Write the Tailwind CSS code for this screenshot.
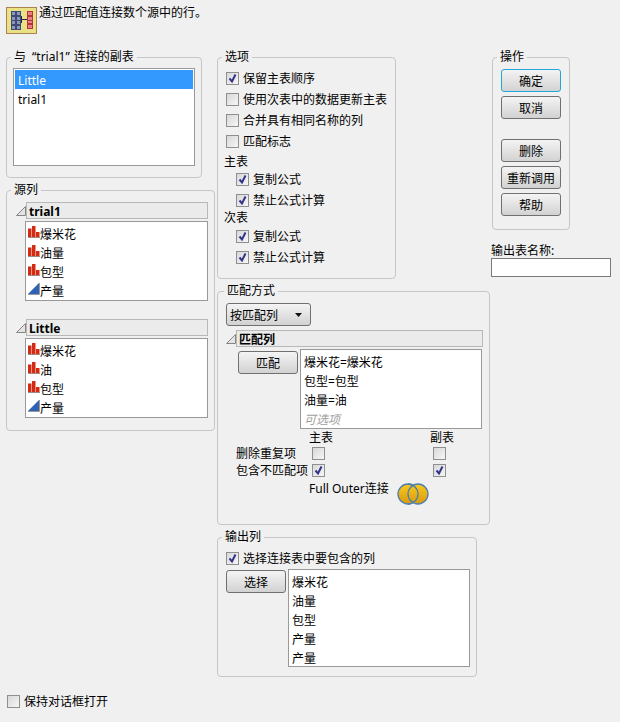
<!DOCTYPE html>
<html lang="zh-CN">
<head>
  <meta charset="UTF-8" />
  <title>联接</title>
  <script src="https://cdn.jsdelivr.net/npm/@tailwindcss/browser@4"></script>
</head>
<body class="w-[620px] h-[722px] overflow-hidden bg-[#f0f0f0] text-black text-[12px] leading-[19px] font-['Noto_Sans','Noto_Sans_CJK_SC',sans-serif]">

  <!-- 标题 -->
  <header class="h-[50px] pl-[6px] pt-[7px] flex items-start">
    <svg class="w-[31px] h-[27px]" viewBox="0 0 31 27">
      <rect x="0.5" y="0.5" width="30" height="26" fill="#e9e183" stroke="#a8834f" />
      <rect x="5" y="4" width="10" height="19" fill="#3c4a78" />
      <g fill="#8d97b8">
        <rect x="6" y="5" width="3" height="3" /><rect x="11" y="5" width="3" height="3" />
        <rect x="6" y="10" width="3" height="3" /><rect x="11" y="10" width="3" height="3" />
        <rect x="6" y="14" width="3" height="3" /><rect x="11" y="14" width="3" height="3" />
        <rect x="6" y="19" width="3" height="3" /><rect x="11" y="19" width="3" height="3" />
      </g>
      <rect x="21" y="4" width="6" height="18" fill="#b8343c" />
      <g fill="#e8808a">
        <rect x="22" y="5" width="4" height="3" /><rect x="22" y="10" width="4" height="3" />
        <rect x="22" y="14" width="4" height="2" /><rect x="22" y="18" width="4" height="3" />
      </g>
      <path d="M15 12.500H21M15.500 9V16" stroke="#26264e" stroke-width="1" fill="none" />
    </svg>
    <p class="ml-[2px] -mt-[4px]">通过匹配值连接数个源中的行。</p>
  </header>

  <div class="flex pl-[6px] items-start">
    <!-- 左列 -->
    <div class="w-[209px] flex flex-col items-start">
      <fieldset class="w-[196px] h-[128px] border border-[#c6c6c6] rounded-[4px] px-[6px]">
        <legend class="-ml-[2px] px-[3px] leading-[14px]">与<span class="ml-[6px]">“trial1”</span><span class="ml-[4px]">连接的副表</span></legend>
        <div class="mt-[4px] h-[98px] border border-[#999999] bg-white p-px">
          <div class="h-[19px] bg-[#3399ff] text-white pl-[3px] pt-px">Little</div>
          <div class="h-[19px] pl-[3px] pt-px">trial1</div>
        </div>
      </fieldset>

      <fieldset class="mt-[5px] w-[209px] h-[248px] border border-[#c6c6c6] rounded-[4px] pl-[9px] pr-[6px]">
        <legend class="-ml-[5px] px-[3px] leading-[14px]">源列</legend>
        <div class="mt-[5px] flex items-center h-[17px]">
          <svg class="w-[10px] h-[10px]" viewBox="0 0 10 10"><path d="M9.500 0.500V9.500H0.500Z" fill="#e4e4e4" stroke="#858585" /></svg>
          <div class="h-[17px] flex-1 border border-[#b8b8b8] bg-[#ebebeb] pl-[2px] font-bold leading-[17px]">trial1</div>
        </div>
        <div class="mt-[2px] ml-[9px] h-[80px] border border-[#999999] bg-white">
          <div class="h-[19px] flex items-start pl-[2px]"><svg class="mt-[4px] w-[12px] h-[12px]" viewBox="0 0 12 12"><path d="M0 2.500H3.500V11H0ZM4 0H7.500V11H4ZM8 6H11.500V11H8Z" fill="#d42a12" /><path d="M0 11.500H12" stroke="#a08a86" /></svg><span class="mt-[3px]">爆米花</span></div>
          <div class="h-[19px] flex items-start pl-[2px]"><svg class="mt-[4px] w-[12px] h-[12px]" viewBox="0 0 12 12"><path d="M0 2.500H3.500V11H0ZM4 0H7.500V11H4ZM8 6H11.500V11H8Z" fill="#d42a12" /><path d="M0 11.500H12" stroke="#a08a86" /></svg><span class="mt-[3px]">油量</span></div>
          <div class="h-[19px] flex items-start pl-[2px]"><svg class="mt-[4px] w-[12px] h-[12px]" viewBox="0 0 12 12"><path d="M0 2.500H3.500V11H0ZM4 0H7.500V11H4ZM8 6H11.500V11H8Z" fill="#d42a12" /><path d="M0 11.500H12" stroke="#a08a86" /></svg><span class="mt-[3px]">包型</span></div>
          <div class="h-[19px] flex items-start pl-[2px]"><svg class="mt-[4px] w-[12px] h-[12px]" viewBox="0 0 12 12"><path d="M0 11L11 0V11Z" fill="#2e62b4" /><path d="M0 11.500H11.500V0" fill="none" stroke="#999999" /></svg><span class="mt-[3px]">产量</span></div>
        </div>
        <div class="mt-[18px] flex items-center h-[17px]">
          <svg class="w-[10px] h-[10px]" viewBox="0 0 10 10"><path d="M9.500 0.500V9.500H0.500Z" fill="#e4e4e4" stroke="#858585" /></svg>
          <div class="h-[17px] flex-1 border border-[#b8b8b8] bg-[#ebebeb] pl-[2px] font-bold leading-[17px]">Little</div>
        </div>
        <div class="mt-[2px] ml-[9px] h-[80px] border border-[#999999] bg-white">
          <div class="h-[19px] flex items-start pl-[2px]"><svg class="mt-[4px] w-[12px] h-[12px]" viewBox="0 0 12 12"><path d="M0 2.500H3.500V11H0ZM4 0H7.500V11H4ZM8 6H11.500V11H8Z" fill="#d42a12" /><path d="M0 11.500H12" stroke="#a08a86" /></svg><span class="mt-[3px]">爆米花</span></div>
          <div class="h-[19px] flex items-start pl-[2px]"><svg class="mt-[4px] w-[12px] h-[12px]" viewBox="0 0 12 12"><path d="M0 2.500H3.500V11H0ZM4 0H7.500V11H4ZM8 6H11.500V11H8Z" fill="#d42a12" /><path d="M0 11.500H12" stroke="#a08a86" /></svg><span class="mt-[3px]">油</span></div>
          <div class="h-[19px] flex items-start pl-[2px]"><svg class="mt-[4px] w-[12px] h-[12px]" viewBox="0 0 12 12"><path d="M0 2.500H3.500V11H0ZM4 0H7.500V11H4ZM8 6H11.500V11H8Z" fill="#d42a12" /><path d="M0 11.500H12" stroke="#a08a86" /></svg><span class="mt-[3px]">包型</span></div>
          <div class="h-[19px] flex items-start pl-[2px]"><svg class="mt-[4px] w-[12px] h-[12px]" viewBox="0 0 12 12"><path d="M0 11L11 0V11Z" fill="#2e62b4" /><path d="M0 11.500H11.500V0" fill="none" stroke="#999999" /></svg><span class="mt-[3px]">产量</span></div>
        </div>
      </fieldset>
    </div>

    <!-- 中列 -->
    <div class="ml-[2px] w-[273px] flex flex-col items-start">
      <fieldset class="w-[179px] h-[229px] border border-[#c6c6c6] rounded-[4px] pl-[6px]">
        <legend class="-ml-[2px] px-[3px] leading-[14px]">选项</legend>
        <div class="pl-[2px] pt-[5px] flex flex-col gap-[2px]">
          <label class="h-[19px] flex items-center gap-[4px]"><span class="w-[13px] h-[13px] border border-[#8e8f8f] bg-linear-to-br from-[#d8d8d8] to-[#f6f6f6]"><svg viewBox="0 0 11 11"><path d="M2.500 5.500L5 8.500L8.500 1.500" stroke="#33338a" stroke-width="2" fill="none" /></svg></span>保留主表顺序</label>
          <label class="h-[19px] flex items-center gap-[4px]"><span class="w-[13px] h-[13px] border border-[#8e8f8f] bg-linear-to-br from-[#d8d8d8] to-[#f6f6f6]"></span>使用次表中的数据更新主表</label>
          <label class="h-[19px] flex items-center gap-[4px]"><span class="w-[13px] h-[13px] border border-[#8e8f8f] bg-linear-to-br from-[#d8d8d8] to-[#f6f6f6]"></span>合并具有相同名称的列</label>
          <label class="h-[19px] flex items-center gap-[4px]"><span class="w-[13px] h-[13px] border border-[#8e8f8f] bg-linear-to-br from-[#d8d8d8] to-[#f6f6f6]"></span>匹配标志</label>
        </div>
        <p class="mt-px h-[18px]">主表</p>
        <div class="pl-[12px] flex flex-col gap-[2px]">
          <label class="h-[19px] flex items-center gap-[4px]"><span class="w-[13px] h-[13px] border border-[#8e8f8f] bg-linear-to-br from-[#d8d8d8] to-[#f6f6f6]"><svg viewBox="0 0 11 11"><path d="M2.500 5.500L5 8.500L8.500 1.500" stroke="#33338a" stroke-width="2" fill="none" /></svg></span>复制公式</label>
          <label class="h-[19px] flex items-center gap-[4px]"><span class="w-[13px] h-[13px] border border-[#8e8f8f] bg-linear-to-br from-[#d8d8d8] to-[#f6f6f6]"><svg viewBox="0 0 11 11"><path d="M2.500 5.500L5 8.500L8.500 1.500" stroke="#33338a" stroke-width="2" fill="none" /></svg></span>禁止公式计算</label>
        </div>
        <p class="-mt-[2px] h-[19px]">次表</p>
        <div class="pl-[12px] flex flex-col gap-[2px]">
          <label class="h-[19px] flex items-center gap-[4px]"><span class="w-[13px] h-[13px] border border-[#8e8f8f] bg-linear-to-br from-[#d8d8d8] to-[#f6f6f6]"><svg viewBox="0 0 11 11"><path d="M2.500 5.500L5 8.500L8.500 1.500" stroke="#33338a" stroke-width="2" fill="none" /></svg></span>复制公式</label>
          <label class="h-[19px] flex items-center gap-[4px]"><span class="w-[13px] h-[13px] border border-[#8e8f8f] bg-linear-to-br from-[#d8d8d8] to-[#f6f6f6]"><svg viewBox="0 0 11 11"><path d="M2.500 5.500L5 8.500L8.500 1.500" stroke="#33338a" stroke-width="2" fill="none" /></svg></span>禁止公式计算</label>
        </div>
      </fieldset>

      <fieldset class="mt-[5px] w-[273px] h-[241px] border border-[#c6c6c6] rounded-[4px] pl-[8px] pr-[6px]">
        <legend class="-ml-[2px] px-[3px] leading-[14px]">匹配方式</legend>
        <button class="mt-[5px] w-[85px] h-[23px] flex items-center justify-between px-[3px] pr-[8px] pt-px border border-[#707070] rounded-[3px] bg-linear-to-b from-[#f4f4f4] to-[#d2d2d2]">按匹配列<svg class="w-[7px] h-[4px]" viewBox="0 0 7 4"><path d="M0 0H7L3.500 4Z" fill="#111" /></svg></button>
        <div class="mt-[4px] flex items-center h-[17px]">
          <svg class="w-[10px] h-[10px] mt-px" viewBox="0 0 10 10"><path d="M9.500 0.500V9.500H0.500Z" fill="#e4e4e4" stroke="#858585" /></svg>
          <div class="h-[17px] flex-1 border border-[#b8b8b8] bg-[#ebebeb] pl-[2px] font-bold leading-[17px]">匹配列</div>
        </div>
        <div class="mt-[2px] flex items-start">
          <button class="ml-[12px] mt-[2px] w-[60px] h-[23px] pt-px border border-[#707070] rounded-[3px] bg-linear-to-b from-[#f4f4f4] to-[#d2d2d2]">匹配</button>
          <div class="ml-[2px] w-[182px] h-[80px] border border-[#999999] bg-white pl-[3px] pt-[3px]">
            <div class="h-[19px]">爆米花=爆米花</div>
            <div class="h-[19px]">包型=包型</div>
            <div class="h-[19px]">油量=油</div>
            <div class="h-[19px] italic text-[#a0a0a0]">可选项</div>
          </div>
        </div>
        <div class="grid grid-cols-[76px_121px_auto] grid-rows-[16px_17px_17px] pl-[10px] leading-[17px]">
          <span></span><span class="-ml-[3px]">主表</span><span class="-ml-[3px]">副表</span>
          <span>删除重复项</span>
          <span class="flex items-center"><span class="w-[13px] h-[13px] border border-[#8e8f8f] bg-linear-to-br from-[#d8d8d8] to-[#f6f6f6]"></span></span>
          <span class="flex items-center"><span class="w-[13px] h-[13px] border border-[#8e8f8f] bg-linear-to-br from-[#d8d8d8] to-[#f6f6f6]"></span></span>
          <span>包含不匹配项</span>
          <span class="flex items-center"><span class="w-[13px] h-[13px] border border-[#8e8f8f] bg-linear-to-br from-[#d8d8d8] to-[#f6f6f6]"><svg viewBox="0 0 11 11"><path d="M2.500 5.500L5 8.500L8.500 1.500" stroke="#33338a" stroke-width="2" fill="none" /></svg></span></span>
          <span class="flex items-center"><span class="w-[13px] h-[13px] border border-[#8e8f8f] bg-linear-to-br from-[#d8d8d8] to-[#f6f6f6]"><svg viewBox="0 0 11 11"><path d="M2.500 5.500L5 8.500L8.500 1.500" stroke="#33338a" stroke-width="2" fill="none" /></svg></span></span>
        </div>
        <div class="mt-px ml-[83px] flex items-start">
          <span class="w-[88px] leading-[17px]">Full Outer连接</span>
          <svg class="w-[32px] h-[22px] mt-[3px]" viewBox="0 0 32 22">
            <defs><linearGradient id="gold" x1="0" y1="0" x2="0" y2="1"><stop offset="0" stop-color="#f9c91c" /><stop offset="1" stop-color="#d89a10" /></linearGradient></defs>
            <circle cx="11" cy="11" r="10" fill="url(#gold)" stroke="#4a7fb0" stroke-width="1.300" />
            <circle cx="21" cy="11" r="10" fill="url(#gold)" stroke="#4a7fb0" stroke-width="1.300" />
            <path d="M11 1A10 10 0 0 1 11 21" fill="none" stroke="#4a7fb0" stroke-width="1.300" />
          </svg>
        </div>
      </fieldset>

      <fieldset class="mt-[5px] w-[260px] h-[147px] border border-[#c6c6c6] rounded-[4px] pl-[8px] pr-[6px]">
        <legend class="-ml-[4px] px-[3px] leading-[14px]">输出列</legend>
        <label class="mt-[5px] mb-px h-[19px] flex items-center gap-[4px]"><span class="w-[13px] h-[13px] border border-[#8e8f8f] bg-linear-to-br from-[#d8d8d8] to-[#f6f6f6]"><svg viewBox="0 0 11 11"><path d="M2.500 5.500L5 8.500L8.500 1.500" stroke="#33338a" stroke-width="2" fill="none" /></svg></span>选择连接表中要包含的列</label>
        <div class="flex items-start">
          <button class="mt-px w-[60px] h-[23px] pt-px border border-[#707070] rounded-[3px] bg-linear-to-b from-[#f4f4f4] to-[#d2d2d2]">选择</button>
          <div class="ml-[2px] w-[182px] h-[98px] border border-[#999999] bg-white pl-[3px] pt-[3px]">
            <div class="h-[19px]">爆米花</div>
            <div class="h-[19px]">油量</div>
            <div class="h-[19px]">包型</div>
            <div class="h-[19px]">产量</div>
            <div class="h-[19px]">产量</div>
          </div>
        </div>
      </fieldset>
    </div>

    <!-- 右列 -->
    <div class="ml-[2px] w-[120px] flex flex-col items-start">
      <fieldset class="w-[78px] h-[180px] border border-[#c6c6c6] rounded-[4px] pl-[8px]">
        <legend class="-ml-[4px] px-[3px] leading-[14px]">操作</legend>
        <div class="mt-[5px] flex flex-col gap-[4px]">
          <button class="w-[60px] h-[23px] pt-px border border-[#22a8d8] rounded-[3px] bg-linear-to-b from-[#f4f4f4] to-[#d2d2d2]">确定</button>
          <button class="w-[60px] h-[23px] pt-px border border-[#707070] rounded-[3px] bg-linear-to-b from-[#f4f4f4] to-[#d2d2d2]">取消</button>
          <button class="mt-[16px] w-[60px] h-[23px] pt-px border border-[#707070] rounded-[3px] bg-linear-to-b from-[#f4f4f4] to-[#d2d2d2]">删除</button>
          <button class="w-[60px] h-[23px] pt-px border border-[#707070] rounded-[3px] bg-linear-to-b from-[#f4f4f4] to-[#d2d2d2]">重新调用</button>
          <button class="w-[60px] h-[23px] pt-px border border-[#707070] rounded-[3px] bg-linear-to-b from-[#f4f4f4] to-[#d2d2d2]">帮助</button>
        </div>
      </fieldset>
      <label class="-ml-px mt-[13px] leading-[15px]">输出表名称:</label>
      <input type="text" class="-ml-px w-[120px] h-[19px] border border-[#7a7a7a] bg-white" />
    </div>
  </div>

  <!-- 底部 -->
  <label class="mt-[15px] ml-[7px] h-[19px] flex items-center gap-[4px]"><span class="w-[13px] h-[13px] border border-[#8e8f8f] bg-linear-to-br from-[#d8d8d8] to-[#f6f6f6]"></span>保持对话框打开</label>
</body>
</html>
